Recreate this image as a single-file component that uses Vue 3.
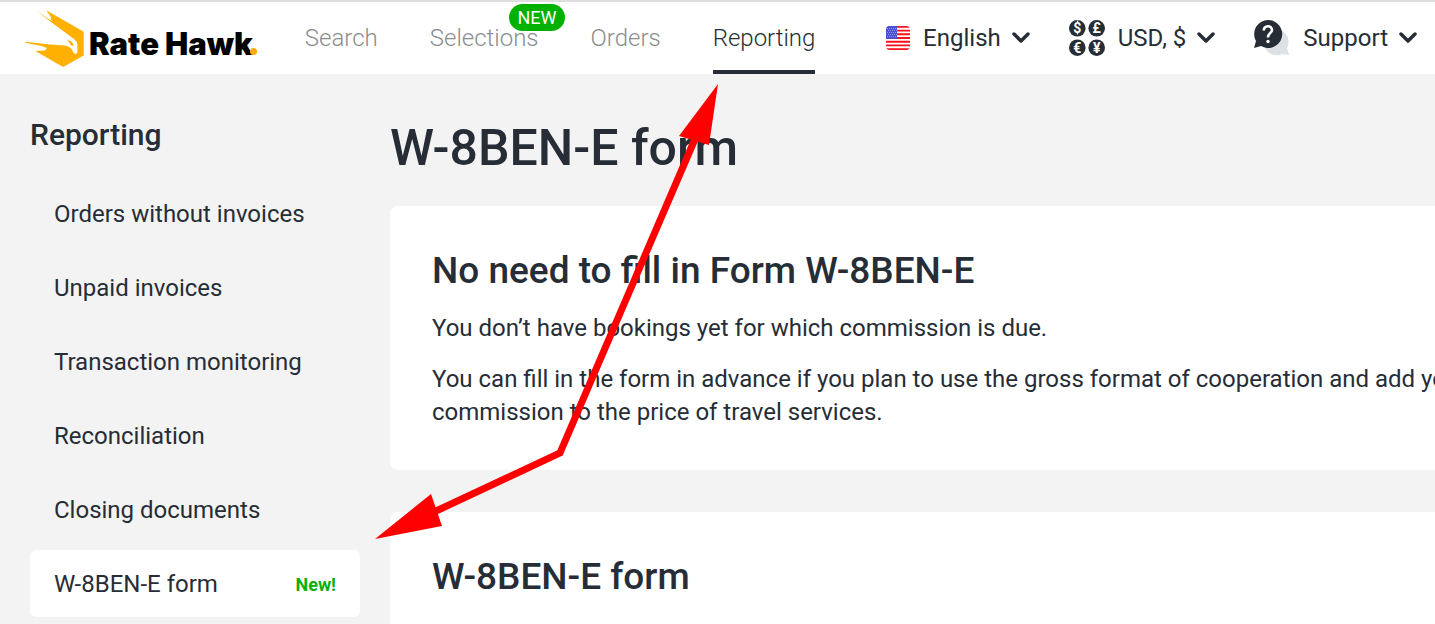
<script setup>
const navItems = [
  { label: 'Search' },
  { label: 'Selections', badge: 'NEW' },
  { label: 'Orders' },
  { label: 'Reporting', active: true },
]

const sideItems = [
  { label: 'Orders without invoices' },
  { label: 'Unpaid invoices' },
  { label: 'Transaction monitoring' },
  { label: 'Reconciliation' },
  { label: 'Closing documents' },
  { label: 'W-8BEN-E form', active: true, note: 'New!' },
]

const coins = [
  { sign: '$', x: 8.3, y: 8.3 },
  { sign: '£', x: 27.7, y: 8.3 },
  { sign: '€', x: 8.3, y: 27.7 },
  { sign: '¥', x: 27.7, y: 27.7 },
]
</script>

<template>
  <div class="page">
    <header class="header">
      <a class="logo" href="#" aria-label="Rate Hawk">
        <svg class="hawk" viewBox="75 29 176 172" width="59" height="57" aria-hidden="true">
          <path
            fill="#ffb000"
            d="M112 32 L149 59 L156 63 Q149 56 153 52 L138 30 L251 95 V166 L189 201 L105 153 L134 151 Q141 147 139 143 L124 138 L75 128 V125 L150 133 L194 136 Q212 139 216 150 Q219 160 227 162 Q232 160 232 154 L232 134 Q231 123 223 117 L148 62 Z M201 119 L214 124 Q220 129 221 138 L212 135 L209 129 Z"
          />
        </svg>
        <span class="wordmark">Rate Hawk</span>
        <span class="dot"></span>
      </a>

      <nav class="nav">
        <a
          v-for="item in navItems"
          :key="item.label"
          href="#"
          class="nav-link"
          :class="{ active: item.active }"
        >
          {{ item.label }}
          <span v-if="item.badge" class="badge">{{ item.badge }}</span>
        </a>
      </nav>

      <div class="tools">
        <button type="button" class="tool">
          <svg class="tool-icon" viewBox="0 0 24 24" width="24" height="24" aria-hidden="true">
            <clipPath id="flag-shape"><rect width="24" height="24" rx="4" /></clipPath>
            <g clip-path="url(#flag-shape)">
              <rect width="24" height="24" fill="#fff" />
              <path
                d="M0 .9H24M0 4.600H24M0 8.300H24M0 12H24M0 15.700H24M0 19.400H24M0 23.100H24"
                stroke="#f8101c"
                stroke-width="1.900"
              />
              <rect width="11" height="12.900" fill="#4a4fd8" />
              <path
                d="M1 2.500H11M2 4.500H11M1 6.500H11M2 8.500H11M1 10.500H11"
                stroke="#8f94ea"
                stroke-width="1"
                stroke-dasharray="1 1"
              />
            </g>
          </svg>
          <span>English</span>
          <svg class="chevron" viewBox="0 0 18 12" width="18" height="12" aria-hidden="true">
            <path d="M2 2 L9 9 L16 2" />
          </svg>
        </button>

        <button type="button" class="tool">
          <svg class="tool-icon" viewBox="0 0 36 36" width="36" height="36" aria-hidden="true">
            <g v-for="coin in coins" :key="coin.sign">
              <circle :cx="coin.x" :cy="coin.y" r="8.300" fill="#262d36" />
              <text class="coin-sign" :x="coin.x" :y="coin.y + 5">{{ coin.sign }}</text>
            </g>
          </svg>
          <span>USD, $</span>
          <svg class="chevron" viewBox="0 0 18 12" width="18" height="12" aria-hidden="true">
            <path d="M2 2 L9 9 L16 2" />
          </svg>
        </button>

        <button type="button" class="tool">
          <svg class="tool-icon" viewBox="0 0 36 36" width="36" height="36" aria-hidden="true">
            <path d="M23 9 A13 13 0 0 1 33 28 L35 35 L28 34 A13 13 0 0 1 11 28 Z" fill="#dde0e5" />
            <path d="M14 0 A14 14 0 1 1 7 26 L0 28 L2 21 A14 14 0 0 1 14 0 Z" fill="#262d36" />
            <path
              d="M9.800 10.500 C10 5 18 5 18 10 C18 13 14 13 14 17.500"
              fill="none"
              stroke="#fff"
              stroke-width="2.600"
            />
            <circle cx="14" cy="21.500" r="1.700" fill="#fff" />
          </svg>
          <span>Support</span>
          <svg class="chevron" viewBox="0 0 18 12" width="18" height="12" aria-hidden="true">
            <path d="M2 2 L9 9 L16 2" />
          </svg>
        </button>
      </div>
    </header>

    <div class="layout">
      <aside class="sidebar">
        <h2 class="side-title">Reporting</h2>
        <nav class="side-nav">
          <a
            v-for="item in sideItems"
            :key="item.label"
            href="#"
            class="side-link"
            :class="{ active: item.active }"
          >
            <span>{{ item.label }}</span>
            <span v-if="item.note" class="note">{{ item.note }}</span>
          </a>
        </nav>
      </aside>

      <main class="content">
        <h1>W-8BEN-E form</h1>
        <section class="card">
          <h2>No need to fill in Form W-8BEN-E</h2>
          <p>You don’t have bookings yet for which commission is due.</p>
          <p>
            You can fill in the form in advance if you plan to use the gross format of cooperation and add your
            commission to the price of travel services.
          </p>
        </section>
        <section class="card">
          <h2>W-8BEN-E form</h2>
        </section>
      </main>
    </div>

    <svg class="pointer" viewBox="375 84 343 455" width="343" height="455" aria-hidden="true">
      <path d="M695 139 L560 453 L434 512" fill="none" stroke="#f00" stroke-width="7" />
      <path d="M718 84 L679 136 L709 145 Z M375 539 L431 494 L442 526 Z" fill="#f00" />
    </svg>
  </div>
</template>

<style>
body {
  margin: 0;
  background: #f3f3f3;
}
</style>

<style scoped>
.page {
  position: relative;
  height: 100vh;
  overflow: hidden;
  box-sizing: border-box;
  border-top: 2px solid #dedede;
  background: #f3f3f3;
  color: #262d36;
  font-family: Roboto, "Liberation Sans", sans-serif;
  font-size: 24px;
  line-height: 33px;
}

a {
  color: inherit;
  text-decoration: none;
}

h1,
h2,
p {
  margin: 0;
}

.header {
  display: flex;
  align-items: center;
  height: 72px;
  padding: 0 18px 0 25px;
  background: #fff;
}

.logo {
  display: flex;
  align-items: center;
  position: relative;
  color: #000;
}

.wordmark {
  margin: 10px 0 0 5px;
  font-family: Inter, sans-serif;
  font-size: 31px;
  font-weight: 900;
  white-space: nowrap;
}

.dot {
  position: absolute;
  right: -4px;
  bottom: 12px;
  width: 7px;
  height: 7px;
  border-radius: 50%;
  background: #ffa90a;
}

.nav {
  display: flex;
  align-self: stretch;
  gap: 52px;
  margin-left: 52px;
}

.nav-link {
  position: relative;
  display: flex;
  align-items: center;
  box-sizing: border-box;
  border-bottom: 4px solid transparent;
  padding-top: 4px;
  color: #8b8d8f;
  font-weight: 300;
}

.nav-link.active {
  border-color: #262d36;
  color: #262d36;
}

.badge {
  position: absolute;
  top: 2px;
  right: -26px;
  padding: 0 8px;
  border-radius: 14px;
  background: #00b100;
  color: #fff;
  font-size: 18px;
  font-weight: 400;
  line-height: 27px;
}

.tools {
  display: flex;
  gap: 39px;
  margin-left: auto;
}

.tool {
  display: flex;
  align-items: center;
  gap: 11px;
  padding: 0;
  border: 0;
  background: none;
  color: inherit;
  font: inherit;
  white-space: nowrap;
}

.tool-icon {
  margin-right: 2px;
}

.chevron path {
  fill: none;
  stroke: #262d36;
  stroke-width: 3.5;
  stroke-linecap: round;
  stroke-linejoin: round;
}

.coin-sign {
  fill: #fff;
  font-size: 14px;
  font-weight: 700;
  text-anchor: middle;
}

.layout {
  display: grid;
  grid-template-columns: 330px minmax(1160px, 1fr);
  gap: 30px;
  padding: 0 30px;
}

.side-title {
  margin-top: 44px;
  font-size: 30px;
  font-weight: 500;
}

.side-nav {
  display: flex;
  flex-direction: column;
  gap: 7px;
  margin-top: 29px;
}

.side-link {
  display: flex;
  align-items: center;
  justify-content: space-between;
  padding: 18px 24px 16px;
  border-radius: 6px;
}

.side-link.active {
  background: #fff;
}

.note {
  color: #0ab00a;
  font-size: 18px;
  font-weight: 700;
}

h1 {
  margin: 44px 0 28px;
  font-size: 50px;
  font-weight: 500;
  line-height: 60px;
}

.card {
  margin-bottom: 42px;
  padding: 42px 42px 41px;
  border-radius: 8px;
  background: #fff;
}

.card h2 {
  font-size: 37px;
  font-weight: 500;
  line-height: 46px;
}

.card p {
  margin-top: 18px;
}

.pointer {
  position: absolute;
  left: 375px;
  top: 82px;
}
</style>
